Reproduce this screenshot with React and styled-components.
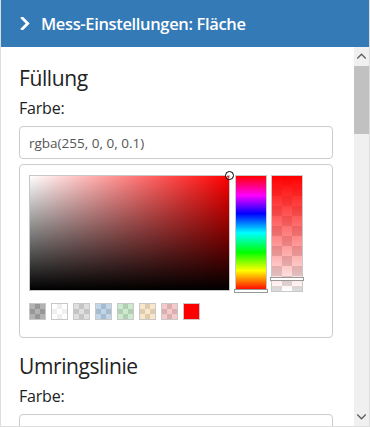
import React from "react";
import styled, { createGlobalStyle } from "styled-components";

const COLORS = {
  primary: "#337ab7",
  border: "#dddddd",
  inputBorder: "#cccccc",
  text: "#222222",
  inputText: "#555555",
  track: "#f0f0f0",
  thumb: "#c1c1c1",
  arrow: "#606060",
};

const SWATCHES = [
  "rgba(0, 0, 0, 0.3)",
  "rgba(255, 255, 255, 0.6)",
  "rgba(150, 150, 150, 0.3)",
  "rgba(51, 122, 183, 0.3)",
  "rgba(92, 184, 92, 0.3)",
  "rgba(240, 173, 78, 0.3)",
  "rgba(217, 83, 79, 0.3)",
  "rgb(255, 0, 0)",
];

const GlobalStyle = createGlobalStyle`
  html, body {
    margin: 0;
    padding: 0;
    background: #ffffff;
  }
  body {
    font-family: "Open Sans", "Noto Sans", sans-serif;
    color: ${COLORS.text};
  }
`;

const Chevron = ({ up, down, color, size = 10, stroke = 2 }) => {
  let points = "3,1 8,6 3,11";
  if (up) points = "1,8 6,3 11,8";
  if (down) points = "1,4 6,9 11,4";
  return (
    <svg width={size} height={size} viewBox="0 0 12 12" fill="none">
      <polyline
        points={points}
        stroke={color}
        strokeWidth={stroke}
        strokeLinecap="square"
        strokeLinejoin="miter"
      />
    </svg>
  );
};

const App = () => {
  return (
    <>
      <GlobalStyle />
      <Panel>
        <Header>
          <Chevron color="#ffffff" size={13} stroke={2.6} />
          <Title>Mess-Einstellungen: Fläche</Title>
        </Header>
        <Body>
          <Content>
            <SectionTitle>Füllung</SectionTitle>
            <Label>Farbe:</Label>
            <Input>rgba(255, 0, 0, 0.1)</Input>
            <PickerCard>
              <PickerRow>
                <Saturation>
                  <Cursor />
                </Saturation>
                <Hue>
                  <Handle style={{ top: "113px" }} />
                </Hue>
                <Alpha>
                  <AlphaFill />
                  <Handle style={{ top: "101px" }} />
                </Alpha>
              </PickerRow>
              <SwatchRow>
                {SWATCHES.map((color) => (
                  <Swatch key={color}>
                    <SwatchFill style={{ background: color }} />
                  </Swatch>
                ))}
              </SwatchRow>
            </PickerCard>
            <SectionTitle $spaced>Umringslinie</SectionTitle>
            <Label>Farbe:</Label>
            <Input>rgba(255, 0, 0, 1)</Input>
          </Content>
          <Scrollbar>
            <ScrollButton>
              <Chevron up color={COLORS.arrow} size={9} stroke={1.8} />
            </ScrollButton>
            <ScrollTrack>
              <ScrollThumb />
            </ScrollTrack>
            <ScrollButton>
              <Chevron down color={COLORS.arrow} size={9} stroke={1.8} />
            </ScrollButton>
          </Scrollbar>
        </Body>
      </Panel>
    </>
  );
};

const Panel = styled.div`
  width: 370px;
  height: 427px;
  box-sizing: border-box;
  display: flex;
  flex-direction: column;
  border: 1px solid ${COLORS.border};
  border-top: none;
  overflow: hidden;
`;

const Header = styled.div`
  flex: 0 0 47px;
  margin: 0 -1px;
  background: ${COLORS.primary};
  display: flex;
  align-items: center;
  gap: 9px;
  padding-left: 19px;
  color: #ffffff;
`;

const Title = styled.span`
  font-size: 16.5px;
  font-weight: 600;
  letter-spacing: -0.35px;
`;

const Body = styled.div`
  flex: 1;
  display: flex;
  min-height: 0;
`;

const Content = styled.div`
  flex: 1;
  overflow: hidden;
  padding: 17px 21px 0 18px;
  display: flex;
  flex-direction: column;
`;

const SectionTitle = styled.h4`
  margin: ${(p) => (p.$spaced ? "14px" : "0")} 0 6px;
  font-size: 21px;
  font-weight: 400;
  line-height: 28px;
  letter-spacing: -0.4px;
`;

const Label = styled.label`
  font-size: 16px;
  line-height: 20px;
  margin-bottom: 8px;
  letter-spacing: -0.2px;
`;

const Input = styled.div`
  height: 33px;
  flex: 0 0 33px;
  box-sizing: border-box;
  border: 1px solid ${COLORS.inputBorder};
  border-radius: 4px;
  padding: 0 9px;
  display: flex;
  align-items: center;
  font-size: 13.5px;
  color: ${COLORS.inputText};
`;

const PickerCard = styled.div`
  margin-top: 5px;
  border: 1px solid ${COLORS.inputBorder};
  border-radius: 4px;
  padding: 10px 9px 17px;
  display: flex;
  flex-direction: column;
  gap: 11px;
`;

const PickerRow = styled.div`
  display: flex;
  align-items: flex-start;
`;

const Saturation = styled.div`
  position: relative;
  width: 201px;
  height: 116px;
  box-sizing: border-box;
  border: 1px solid #c8c8c8;
  background: linear-gradient(to top, #000 0%, rgba(0, 0, 0, 0) 100%),
    linear-gradient(to right, #fff 0%, rgba(255, 255, 255, 0) 100%), #ff0000;
`;

const Cursor = styled.div`
  position: absolute;
  top: -5px;
  right: -5px;
  width: 9px;
  height: 9px;
  box-sizing: border-box;
  border-radius: 50%;
  border: 1.5px solid #000;
  box-shadow: inset 0 0 0 1px rgba(255, 255, 255, 0.9);
`;

const Hue = styled.div`
  position: relative;
  margin-left: 5px;
  width: 32px;
  height: 116px;
  box-sizing: border-box;
  border: 1px solid #c8c8c8;
  background: linear-gradient(
    to bottom,
    #ff0000 0%,
    #ff00ff 17%,
    #0000ff 33%,
    #00ffff 50%,
    #00ff00 67%,
    #ffff00 83%,
    #ff0000 100%
  );
`;

const Alpha = styled.div`
  position: relative;
  margin-left: 4px;
  width: 32px;
  height: 117px;
  box-sizing: border-box;
  border: 1px solid #c8c8c8;
  background-color: #ffffff;
  background-image: linear-gradient(45deg, #dcdcdc 25%, transparent 25%, transparent 75%, #dcdcdc 75%),
    linear-gradient(45deg, #dcdcdc 25%, transparent 25%, transparent 75%, #dcdcdc 75%);
  background-size: 20px 20px;
  background-position: 0 0, 10px 10px;
`;

const AlphaFill = styled.div`
  height: 100%;
  background: linear-gradient(to bottom, rgba(255, 0, 0, 1), rgba(255, 0, 0, 0));
`;

const Handle = styled.div`
  position: absolute;
  left: -2px;
  right: -2px;
  height: 4px;
  box-sizing: border-box;
  border: 1px solid #999;
  background: #fff;
`;

const SwatchRow = styled.div`
  display: flex;
  gap: 5px;
`;

const Swatch = styled.div`
  width: 17px;
  height: 17px;
  box-sizing: border-box;
  border: 1px solid #c8c8c8;
  background-color: #ffffff;
  background-image: linear-gradient(45deg, #d8d8d8 25%, transparent 25%, transparent 75%, #d8d8d8 75%),
    linear-gradient(45deg, #d8d8d8 25%, transparent 25%, transparent 75%, #d8d8d8 75%);
  background-size: 10px 10px;
  background-position: 0 0, 5px 5px;
`;

const SwatchFill = styled.div`
  width: 100%;
  height: 100%;
`;

const Scrollbar = styled.div`
  flex: 0 0 15px;
  display: flex;
  flex-direction: column;
  background: ${COLORS.track};
`;

const ScrollButton = styled.div`
  flex: 0 0 19px;
  display: flex;
  align-items: center;
  justify-content: center;
`;

const ScrollTrack = styled.div`
  flex: 1;
  display: flex;
  flex-direction: column;
`;

const ScrollThumb = styled.div`
  height: 68px;
  background: ${COLORS.thumb};
`;

export default App;
